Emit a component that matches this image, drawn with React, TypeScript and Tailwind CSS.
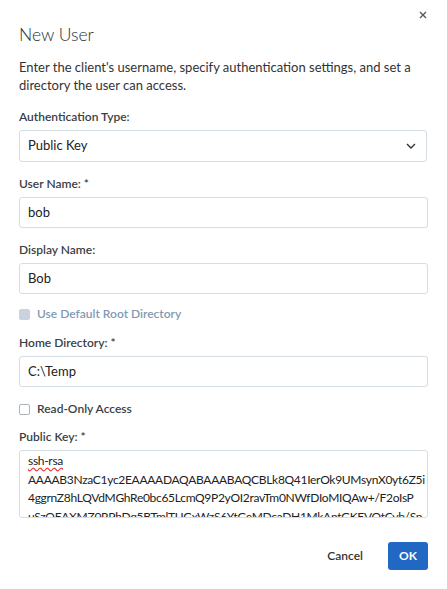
import React from "react";

const font = { fontFamily: '"Segoe UI", Lato, "Noto Sans", sans-serif' };

function Label({ children, required }: { children: React.ReactNode; required?: boolean }) {
  return (
    <div className="text-[12px] leading-[16px] text-[#3a3f44] font-semibold">
      {children}
      {required && <span className="ml-[3px]">*</span>}
    </div>
  );
}

function TextInput({ value }: { value: string }) {
  return (
    <div className="h-[31px] w-full border border-[#d5dde5] rounded-[3px] flex items-center px-[8px] text-[13px] text-[#222]">
      {value}
    </div>
  );
}

export default function App() {
  return (
    <div className="w-[447px] h-[589px] bg-white relative overflow-hidden" style={font}>
      <div className="absolute right-[20px] top-[11px]">
        <svg width="8" height="8" viewBox="0 0 8 8">
          <path d="M1 1 L7 7 M7 1 L1 7" stroke="#555" strokeWidth="1.3" />
        </svg>
      </div>
      <div className="px-[19px] pt-[23px] flex flex-col">
        <h1 className="text-[17.5px] leading-[24px] font-light text-[#2b2f33]">New User</h1>
        <p className="mt-[11px] text-[13px] leading-[18px] text-[#333]">
          Enter the client's username, specify authentication settings, and set a
          <br />
          directory the user can access.
        </p>

        <div className="mt-[15px] flex flex-col gap-[5px]">
          <Label>Authentication Type:</Label>
          <div className="h-[32px] w-[408px] border border-[#d5dde5] rounded-[3px] flex items-center justify-between px-[8px] text-[13px] text-[#222]">
            <span>Public Key</span>
            <svg width="10" height="6" viewBox="0 0 10 6" className="mr-[2px]">
              <path d="M1 1 L5 5 L9 1" fill="none" stroke="#333" strokeWidth="1.4" />
            </svg>
          </div>
        </div>

        <div className="mt-[14px] flex flex-col gap-[5px]">
          <Label required>User Name:</Label>
          <TextInput value="bob" />
        </div>

        <div className="mt-[14px] flex flex-col gap-[5px]">
          <Label>Display Name:</Label>
          <TextInput value="Bob" />
        </div>

        <div className="mt-[12px] flex items-center gap-[7px]">
          <div className="w-[11px] h-[11px] rounded-[2px] bg-[#c8d3de] border border-[#c8d3de]" />
          <span className="text-[12px] leading-[16px] font-semibold text-[#7f9bb3]">Use Default Root Directory</span>
        </div>

        <div className="mt-[13px] flex flex-col gap-[5px]">
          <Label required>Home Directory:</Label>
          <TextInput value="C:\Temp" />
        </div>

        <div className="mt-[14px] flex items-center gap-[7px]">
          <div className="w-[11px] h-[11px] rounded-[2px] bg-white border border-[#aab4be]" />
          <span className="text-[12px] leading-[16px] font-semibold text-[#3a3f44]">Read-Only Access</span>
        </div>

        <div className="mt-[12px] flex flex-col gap-[5px]">
          <Label required>Public Key:</Label>
          <div className="h-[68px] w-full border border-[#d5dde5] rounded-[3px] overflow-hidden px-[8px] pt-[1px] text-[12px] tracking-[-0.3px] leading-[18.5px] text-[#222] whitespace-nowrap">
            <div>
              <span className="underline decoration-wavy decoration-[#e33] underline-offset-[2px]">ssh-rsa</span>
            </div>
            <div>AAAAB3NzaC1yc2EAAAADAQABAAABAQCBLk8Q41IerOk9UMsynX0yt6Z5i</div>
            <div>4ggrnZ8hLQVdMGhRe0bc65LcmQ9P2yOI2ravTm0NWfDIoMIQAw+/F2oIsP</div>
            <div>uSzOEAXMZ0RPhDq5BTmlTUGxWzS6YtGeMDcaDH1MkAntGKEVOtCyb/Sp</div>
          </div>
        </div>

        <div className="mt-[24px] flex items-center justify-end gap-[25px]">
          <span className="text-[12px] font-semibold text-[#333]">Cancel</span>
          <div className="w-[40px] h-[28px] rounded-[3px] bg-[#2168c4] text-white text-[12px] font-bold flex items-center justify-center">
            OK
          </div>
        </div>
      </div>
    </div>
  );
}
